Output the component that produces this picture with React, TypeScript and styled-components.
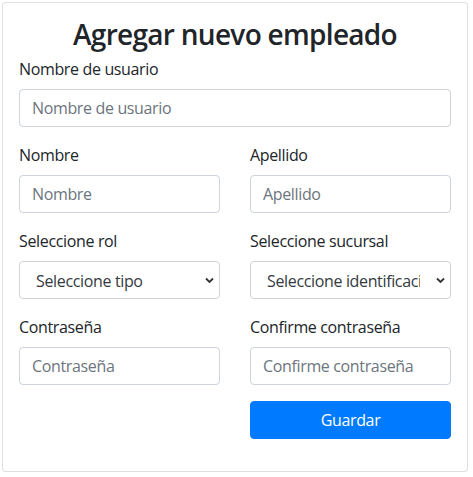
import React from "react";
import styled, { createGlobalStyle } from "styled-components";

const Global = createGlobalStyle`
  html, body { margin: 0; padding: 0; background: #fff; }
  body { font-family: "Open Sans", "Noto Sans", sans-serif; color: #212529; letter-spacing: -0.35px; }
  * { box-sizing: border-box; }
`;

const Card = styled.div`
  width: 466px;
  margin: 2px;
  border: 1px solid rgba(0, 0, 0, 0.125);
  border-radius: 4px;
  padding: 14px 16px 16px;
  background: #fff;
`;

const Title = styled.h3`
  margin: 0 0 6px;
  font-size: 28px;
  line-height: 34px;
  font-weight: 600;
  letter-spacing: -0.7px;
  text-align: center;
  color: #212529;
`;

const Grid = styled.div`
  display: grid;
  grid-template-columns: 201px 201px;
  column-gap: 30px;
`;

const Group = styled.div<{ $full?: boolean; $col?: number }>`
  margin-bottom: 16px;
  grid-column: ${(p) => (p.$full ? "1 / span 2" : p.$col ? `${p.$col}` : "auto")};
`;

const Label = styled.label`
  display: block;
  font-size: 16px;
  line-height: 24px;
  margin-bottom: 8px;
  color: #212529;
`;

const Input = styled.input`
  display: block;
  width: 100%;
  height: 38px;
  padding: 6px 12px;
  font-family: inherit;
  letter-spacing: inherit;
  font-size: 16px;
  line-height: 24px;
  color: #495057;
  background: #fff;
  border: 1px solid #ced4da;
  border-radius: 4px;
  outline: none;
  &::placeholder { color: #6c757d; opacity: 1; }
`;

const SelectWrap = styled.div`
  position: relative;
  width: 100%;
`;

const Select = styled.select`
  display: block;
  width: 100%;
  height: 38px;
  padding: 7px 30px 5px 16px;
  font-family: inherit;
  letter-spacing: inherit;
  font-size: 16px;
  line-height: 24px;
  color: #343a40;
  background: #fff;
  border: 1px solid #ced4da;
  border-radius: 4px;
  appearance: none;
  -webkit-appearance: none;
  outline: none;
  white-space: nowrap;
  overflow: hidden;
`;

const Chevron = styled.svg`
  position: absolute;
  right: 6px;
  top: 16px;
  width: 9px;
  height: 7px;
  pointer-events: none;
`;

const Button = styled.button`
  display: block;
  width: 100%;
  height: 38px;
  border: 1px solid #007bff;
  border-radius: 4px;
  background: #007bff;
  color: #fff;
  font-family: inherit;
  letter-spacing: inherit;
  font-size: 16px;
  line-height: 24px;
  cursor: pointer;
`;

const Arrow = () => (
  <Chevron viewBox="0 0 9 7">
    <path d="M1 1.5 L4.5 5 L8 1.5" fill="none" stroke="#333" strokeWidth="1.8" />
  </Chevron>
);

export default function App() {
  return (
    <>
      <Global />
      <Card>
        <Title>Agregar nuevo empleado</Title>
        <Grid>
          <Group $full>
            <Label>Nombre de usuario</Label>
            <Input placeholder="Nombre de usuario" />
          </Group>
          <Group>
            <Label>Nombre</Label>
            <Input placeholder="Nombre" />
          </Group>
          <Group>
            <Label>Apellido</Label>
            <Input placeholder="Apellido" />
          </Group>
          <Group>
            <Label>Seleccione rol</Label>
            <SelectWrap>
              <Select defaultValue="">
                <option value="">Seleccione tipo</option>
              </Select>
              <Arrow />
            </SelectWrap>
          </Group>
          <Group>
            <Label>Seleccione sucursal</Label>
            <SelectWrap>
              <Select defaultValue="">
                <option value="">Seleccione identificación</option>
              </Select>
              <Arrow />
            </SelectWrap>
          </Group>
          <Group>
            <Label>Contraseña</Label>
            <Input type="password" placeholder="Contraseña" />
          </Group>
          <Group>
            <Label>Confirme contraseña</Label>
            <Input type="password" placeholder="Confirme contraseña" />
          </Group>
          <Group $col={2}>
            <Button>Guardar</Button>
          </Group>
        </Grid>
      </Card>
    </>
  );
}
